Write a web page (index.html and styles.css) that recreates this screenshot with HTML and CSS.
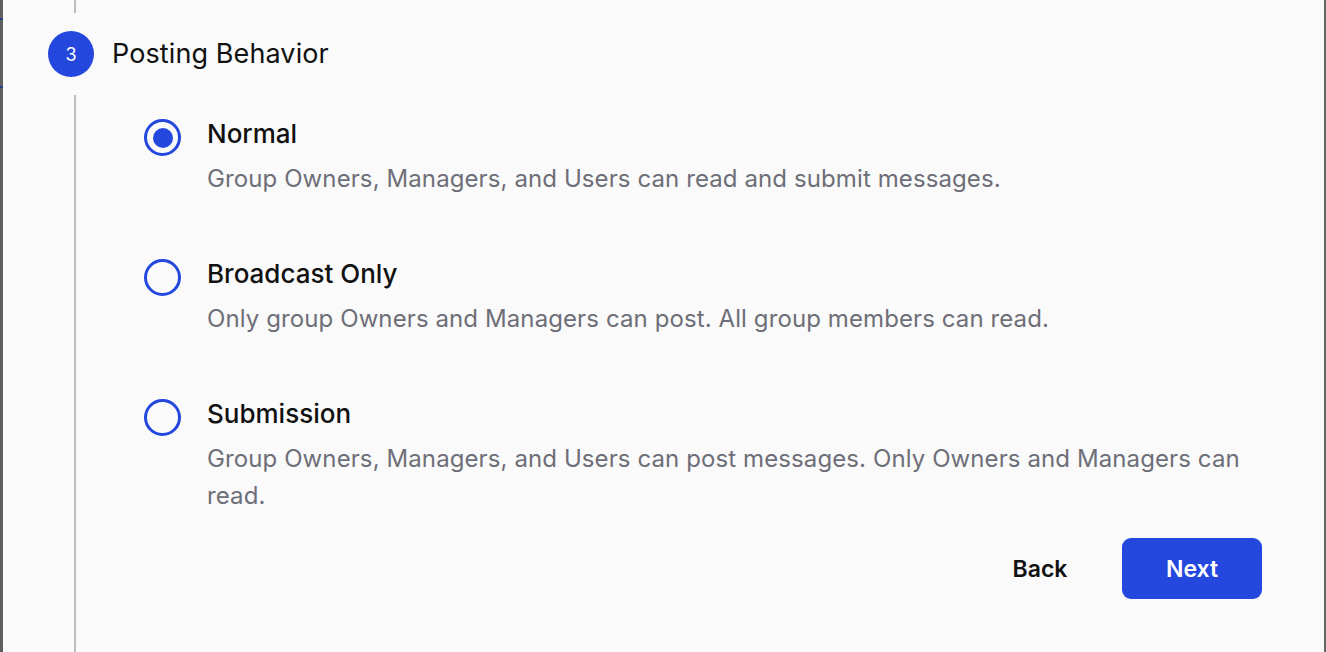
FILE: index.html
```html
<!DOCTYPE html>
<html>
<head>
    <meta charset="utf-8">
    <link rel="stylesheet" href="styles.css">
</head>
<body>
    <div class="frame">
      <div class="edge edge-left"></div>
      <div class="panel">
        <div class="step">
          <div class="rail">
            <div class="rail-line rail-top"></div>
            <div class="step-num">3</div>
            <div class="rail-line rail-rest"></div>
          </div>
          <div class="step-body">
            <h3 class="step-title">Posting Behavior</h3>
            <div class="options">
              <label class="option">
                <span class="radio checked"></span>
                <span class="option-text">
                  <span class="option-name">Normal</span>
                  <span class="option-desc">Group Owners, Managers, and Users can read and submit messages.</span>
                </span>
              </label>
              <label class="option">
                <span class="radio"></span>
                <span class="option-text">
                  <span class="option-name">Broadcast Only</span>
                  <span class="option-desc">Only group Owners and Managers can post. All group members can read.</span>
                </span>
              </label>
              <label class="option">
                <span class="radio"></span>
                <span class="option-text">
                  <span class="option-name">Submission</span>
                  <span class="option-desc">Group Owners, Managers, and Users can post messages. Only Owners and Managers can read.</span>
                </span>
              </label>
            </div>
            <div class="actions">
              <button class="btn btn-back">Back</button>
              <button class="btn btn-next">Next</button>
            </div>
          </div>
        </div>
      </div>
      <div class="edge edge-right"></div>
    </div>
</body>
</html>
```

FILE: styles.css
```css
* {
margin: 0;
padding: 0;
box-sizing: border-box;
font-family: Inter, "Noto Sans", sans-serif;
}

body {
background-color: #fafafa;
color: #111111;
}

.frame {
display: flex;
height: 652px;
overflow: hidden;
}

.edge {
flex: none;
height: 100%;
}

.edge-left {
width: 3px;
background:
  linear-gradient(#2b3f8e, #2b3f8e) 0 18px / 100% 2px no-repeat,
  linear-gradient(#2b3f8e, #2b3f8e) 0 86px / 100% 2px no-repeat,
  #5f5f5f;
}

.edge-right {
width: 2px;
background-color: #666666;
}

.panel {
flex: 1;
padding: 0 62px 0 45px;
}

.step {
display: grid;
grid-template-columns: 46px 1fr;
column-gap: 18px;
min-height: 652px;
}

.rail {
display: flex;
flex-direction: column;
}

.rail-line {
width: 2px;
margin-left: 26px;
background-color: #bdbdbd;
}

.rail-top {
height: 13px;
margin-bottom: 18px;
}

.rail-rest {
flex: 1;
margin-top: 18px;
}

.step-num {
width: 46px;
height: 46px;
border-radius: 50%;
background-color: #2447dd;
color: #ffffff;
font-size: 18px;
display: flex;
align-items: center;
justify-content: center;
}

.step-title {
font-size: 27px;
font-weight: 400;
line-height: 46px;
margin-top: 31px;
letter-spacing: 0.1px;
}

.options {
display: flex;
flex-direction: column;
gap: 61px;
margin-top: 41px;
padding-left: 32px;
}

.option {
display: flex;
align-items: flex-start;
gap: 26px;
cursor: pointer;
}

.radio {
flex: none;
width: 37px;
height: 37px;
margin-top: 1px;
border: 3.5px solid #2447dd;
border-radius: 50%;
display: flex;
align-items: center;
justify-content: center;
}

.radio.checked::before {
content: '';
width: 20px;
height: 20px;
border-radius: 50%;
background-color: #2447dd;
}

.option-text {
display: flex;
flex-direction: column;
gap: 10px;
}

.option-name {
font-size: 26px;
font-weight: 500;
line-height: 32px;
}

.option-desc {
font-size: 24px;
line-height: 37px;
letter-spacing: 0.1px;
color: #6e6e78;
}

.actions {
display: flex;
justify-content: flex-end;
gap: 12px;
margin-top: 24px;
}

.btn {
width: 140px;
height: 61px;
border: none;
border-radius: 9px;
font-size: 23px;
font-weight: 600;
cursor: pointer;
}

.btn-back {
background-color: transparent;
color: #111111;
}

.btn-next {
background-color: #2447dd;
color: #ffffff;
}
```
